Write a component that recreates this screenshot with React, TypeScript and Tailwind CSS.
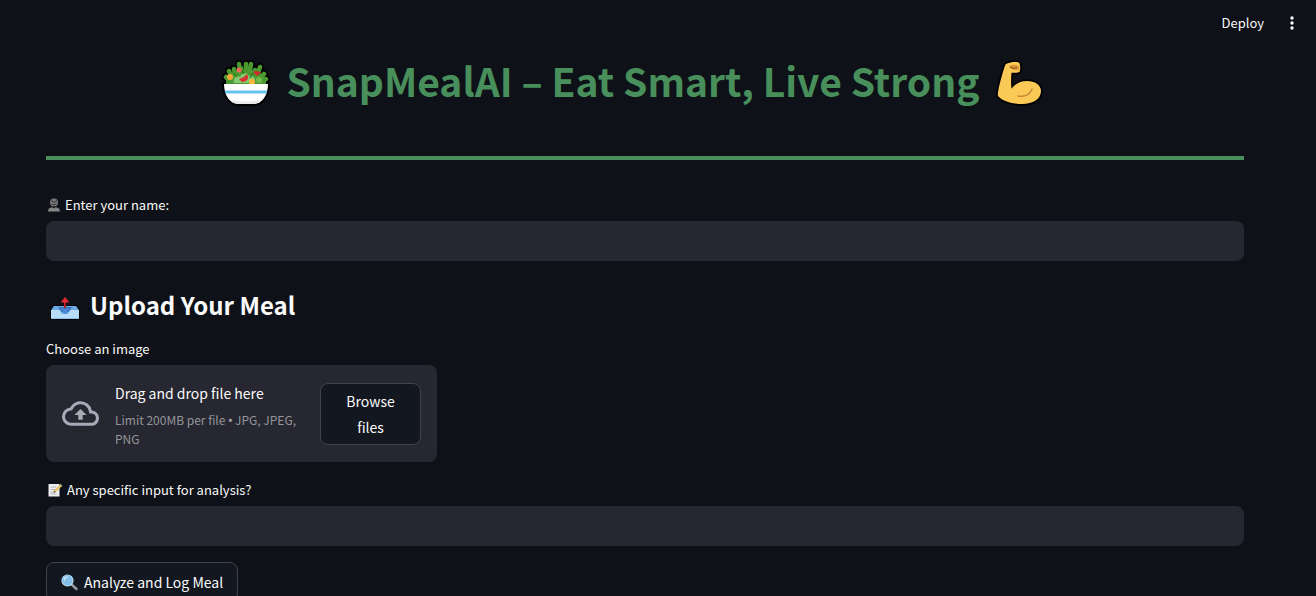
import React from "react";

function SaladIcon() {
  const leaves =
    "M7 21L4 17M11 20L7 11M14 20L12 9M19 18L17 4M21 18L19 8M24 18L24 4M27 17L29 4M31 18L33 10M34 19L38 7M37 20L42 14M41 21L44 19";
  return (
    <svg viewBox="0 0 48 46" className="h-[46px] w-12 shrink-0" aria-hidden="true">
      <g stroke="#000" strokeLinejoin="round" strokeLinecap="round">
        <path d="M2 24h44c0 11-6 20-14 20H16C8 44 2 35 2 24z" strokeWidth="4" />
        <path d={leaves} strokeWidth="8" fill="none" />
      </g>
      <path d={leaves} stroke="#4a9a30" strokeWidth="4.500" strokeLinecap="round" fill="none" />
      <path d="M4 24c0-10 8-14 20-14s20 4 20 14z" fill="#4a9a30" />
      <path d="M12 23c-1-5 3-8 6-6 2-5 7-5 9-1 4-1 7 2 6 7z" fill="#83ca72" />
      <path d="M20 10l2 4M31 13l-3 5M12 13l3 4" stroke="#2c7421" strokeWidth="1.200" fill="none" />
      <circle cx="8" cy="17" r="3" fill="#f8a63c" />
      <circle cx="17" cy="10" r="2.500" fill="#f06b58" />
      <path d="M17 19c4-1 6-3 8-5 3 4 0 8-5 8z" fill="#d83331" />
      <path d="M31 12c2-2 6-1 8 1l-4 3z" fill="#cf2b2b" />
      <circle cx="30" cy="22" r="3" fill="#ffb637" />
      <circle cx="37" cy="20" r="3" fill="#70b94a" />
      <path d="M2 24h44c0 11-6 20-14 20H16C8 44 2 35 2 24z" fill="#fff" />
      <path d="M2.700 30.500h42.600l-.8 3h-41z" fill="#65c3ee" />
      <path d="M10 40c2 3 4 4 7 4h14c3 0 5-1 7-4-6 2-22 2-28 0z" fill="#e9e9ee" />
    </svg>
  );
}

function BicepsIcon() {
  return (
    <svg viewBox="0 0 48 46" className="h-[46px] w-12 shrink-0" aria-hidden="true">
      <path
        d="M11 3.500c3-1.500 9-2 12-1 1.500 2 1.500 7 .5 9.500-2 1-5 .8-8 .8-.5 5-.6 11 0 16C19 24 24 21 31 21c8 0 14 4 14 10 0 8-8 13-19 13-10 0-20-3-24-8C1 32 6 15 8.500 7c.5-2 1-3 2.500-3.500z"
        fill="#fbc956" stroke="#000" strokeWidth="3.500" strokeLinejoin="round" paintOrder="stroke"
      />
      <path d="M14 6c3-2 7-1 9 0v4c-3 0-7 0-9-2z" fill="#dc9836" />
      <path d="M14 6.500c2 2 5 2 7 1" stroke="#9b6022" strokeWidth="1.200" fill="none" />
      <path d="M22 36c6 1 12-1 14-7" stroke="#c98b35" strokeWidth="1.400" strokeLinecap="round" fill="none" />
    </svg>
  );
}

function PersonIcon() {
  return (
    <svg viewBox="0 0 14 14" className="size-3.5" aria-hidden="true">
      <circle cx="7" cy="4.600" r="4" fill="#777" />
      <path d="M4 2.500l3 2 3-2M4.500 6c2 1 3 1 5 0" stroke="#333" strokeWidth=".9" fill="none" />
      <path d="M1 13.500c0-3 2-4 4.500-4.200L7 10.500l1.500-1.200C11 9.500 13 10.500 13 13.500z" fill="#858585" />
    </svg>
  );
}

function OutboxIcon() {
  return (
    <svg viewBox="0 0 30 30" className="size-[30px] shrink-0" aria-hidden="true">
      <path d="M4 16h22l3 4v9H1v-9z" fill="#5b9be2" stroke="#000" strokeWidth="2" paintOrder="stroke" />
      <path d="M4 16h22l3 5H1z" fill="#6fa9e6" />
      <path d="M8 17h14l-3 5h-8z" fill="#3f76c0" />
      <path d="M1 20h8c2 0 2 4 4 4h4c2 0 2-4 4-4h8v8.500H1z" fill="#b7dcf7" />
      <path d="M11 19h8l-4 5z" fill="#4a86d6" />
      <path d="M15 18v-7" stroke="#b51c2a" strokeWidth="2" />
      <path d="M15 7l4.500 5.500h-9z" fill="#e12a36" />
    </svg>
  );
}

function CloudUploadIcon() {
  return (
    <svg viewBox="0 0 24 24" className="size-[37px] shrink-0" fill="#a9a9ba" aria-hidden="true">
      <path d="M19.350 10.040A7.490 7.490 0 0 0 12 4C9.110 4 6.600 5.640 5.350 8.040A5.994 5.994 0 0 0 0 14c0 3.310 2.690 6 6 6h13c2.760 0 5-2.240 5-5 0-2.640-2.050-4.780-4.650-4.960zM19 18H6c-2.210 0-4-1.790-4-4 0-2.050 1.530-3.760 3.560-3.970l1.070-.11.500-.95A5.469 5.469 0 0 1 12 6c2.620 0 4.880 1.860 5.390 4.430l.3 1.500 1.530.11A2.980 2.980 0 0 1 22 15c0 1.650-1.350 3-3 3zM8 13h2.550v3h2.900v-3H16l-4-4z" />
    </svg>
  );
}

function MemoIcon() {
  return (
    <svg viewBox="0 0 15 14" className="h-3.5 w-4" aria-hidden="true">
      <path d="M1 1h11v12.500H1z" fill="#eeeef0" />
      <path d="M3 4h6M3 6.500h5M3 9h4M3 11h6" stroke="#a7a7ad" strokeWidth=".8" />
      <path d="M6 10l.7-2.500L13 1.200l1.700 1.600L8.300 9z" fill="#e8c45b" />
      <path d="M6 10l.7-2.500L8.300 9z" fill="#665f56" />
      <path d="M12 2.200l1-1 1.700 1.600-1 1z" fill="#c4a997" />
    </svg>
  );
}

function MagnifierIcon() {
  return (
    <svg viewBox="0 0 17 17" className="size-[17px]" aria-hidden="true">
      <path d="M10 10l5.500 5" stroke="#9a9ca3" strokeWidth="2.400" strokeLinecap="round" />
      <circle cx="6.500" cy="6.500" r="5.500" fill="#83bde8" stroke="#b4d9f2" strokeWidth="1.200" />
      <path d="M3.500 6c0-2 1-3 3-3" stroke="#d8efff" strokeWidth="1.200" strokeLinecap="round" fill="none" />
    </svg>
  );
}

export default function App() {
  return (
    <div className="flex h-screen flex-col overflow-hidden bg-[#0e1117] font-['Noto_Sans_CJK_SC',sans-serif] text-[#fafafa]">
      <header className="flex h-[46px] shrink-0 items-center justify-end gap-4 pr-3">
        <button type="button" className="text-[13px] leading-5">Deploy</button>
        <button type="button" aria-label="Main menu" className="grid w-6 place-items-center">
          <svg viewBox="0 0 4 14" className="h-3.5 w-1" fill="#fafafa" aria-hidden="true">
            <circle cx="2" cy="2" r="1.700" />
            <circle cx="2" cy="7" r="1.700" />
            <circle cx="2" cy="12" r="1.700" />
          </svg>
        </button>
      </header>

      <main className="flex flex-col pr-[72px] pl-[46px]">
        <h1 className="flex h-[74px] items-center justify-center gap-4 pr-6 text-[39px] leading-[60px] font-bold whitespace-nowrap text-[#488f5c]">
          <SaladIcon />
          <span className="pb-1.5">SnapMealAI – Eat Smart, Live Strong</span>
          <BicepsIcon />
        </h1>
        <hr className="mt-9 h-1 border-0 bg-[#488f5c]" />

        <label htmlFor="name" className="mt-[35px] flex h-5 items-center gap-1 pl-px text-[13px] leading-5">
          <PersonIcon />
          Enter your name:
        </label>
        <input id="name" type="text" className="mt-1.5 h-10 w-full rounded-lg bg-[#262730] px-3 text-sm outline-none" />

        <h2 className="mt-6 flex h-10 items-center gap-2.5 pl-1 text-2xl leading-10 font-bold">
          <OutboxIcon />
          Upload Your Meal
        </h2>

        <label htmlFor="browse" className="mt-3.5 h-5 text-[13px] leading-5">Choose an image</label>
        <section className="mt-1.5 flex h-[97px] w-[391px] items-center rounded-lg bg-[#262730] px-4">
          <CloudUploadIcon />
          <div className="ml-4 min-w-0 flex-1">
            <p className="text-sm leading-6">Drag and drop file here</p>
            <p className="mt-1.5 text-xs leading-[17px] text-[#94959a]">
              <span>Limit 200MB per file</span> <span className="font-['Liberation_Sans']">•</span>{" "}
              <span>JPG, JPEG,</span> <span>PNG</span>
            </p>
          </div>
          <button
            id="browse"
            type="button"
            className="ml-4 w-[101px] rounded-lg border border-[#41434b] bg-[#131720] px-3 py-1 text-sm leading-[26px]"
          >
            Browse files
          </button>
        </section>

        <label htmlFor="notes" className="mt-[18px] flex h-5 items-center gap-1 pl-px text-[13px] leading-5">
          <MemoIcon />
          Any specific input for analysis?
        </label>
        <input id="notes" type="text" className="mt-1.5 h-10 w-full rounded-lg bg-[#262730] px-3 text-sm outline-none" />

        <button
          type="button"
          className="mt-4 flex h-10 shrink-0 items-center gap-1.5 self-start rounded-lg border border-[#41434b] bg-[#131720] px-3.5 text-sm"
        >
          <MagnifierIcon />
          Analyze and Log Meal
        </button>
      </main>
    </div>
  );
}
